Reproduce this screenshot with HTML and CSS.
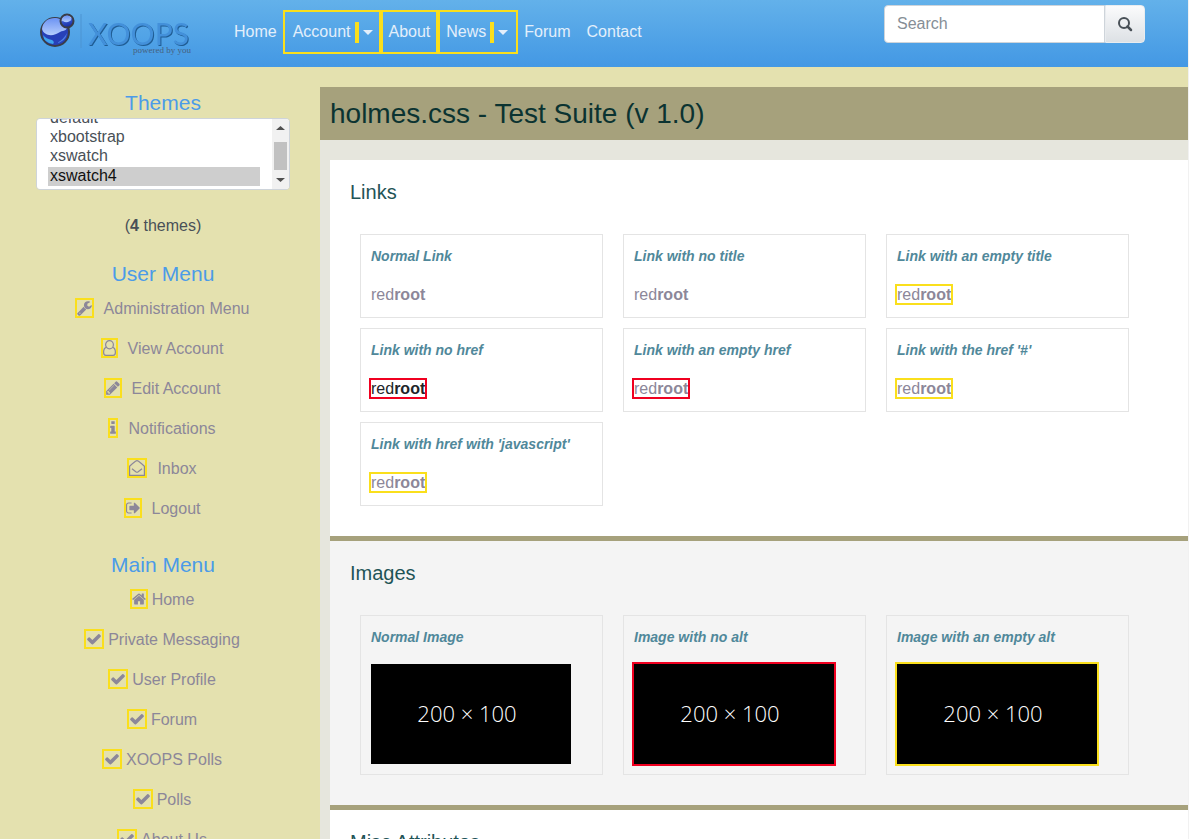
FILE: index.html
```html
<!DOCTYPE html>
<html lang="en">
<head>
<meta charset="utf-8">
<title>holmes.css - Test Suite</title>
<link rel="stylesheet" href="styles.css">
</head>
<body>
<svg class="sprite" aria-hidden="true">
  <symbol id="check" viewBox="0 0 1792 1792"><path d="M1671 566q0 40-28 68l-724 724-136 136q-28 28-68 28t-68-28l-136-136-362-362q-28-28-28-68t28-68l136-136q28-28 68-28t68 28l294 295 656-657q28-28 68-28t68 28l136 136q28 28 28 68z"/></symbol>
</svg>
<header class="navbar">
  <a class="brand" href="/" aria-label="XOOPS powered by you">
    <svg width="156" height="48" viewBox="0 0 156 48">
      <defs>
        <linearGradient id="ball" x1="0" y1="0" x2="0.3" y2="1">
          <stop offset="0" stop-color="#5c86ee"/><stop offset="0.45" stop-color="#a5c0fb"/><stop offset="0.55" stop-color="#3557cf"/><stop offset="1" stop-color="#1a2fa5"/>
        </linearGradient>
        <linearGradient id="shine" x1="0" y1="0" x2="0" y2="1">
          <stop offset="0" stop-color="#6c93f3"/><stop offset="1" stop-color="#b5cdfd"/>
        </linearGradient>
      </defs>
      <circle cx="17" cy="24" r="14" fill="#2740b8" stroke="#3a3d48" stroke-width="2"/>
      <path d="M4 21C5 9 21 6 28 16C31 23 26 22 22 24C15 29 6 28 4 21Z" fill="url(#shine)"/>
      <path d="M5 27Q6 35 15 36Q17 34 14 32Q8 31 5 27Z" fill="#3fa4ec"/>
      <path d="M19 35Q28 33 29 25Q26 31 19 35Z" fill="#4d7ee4"/>
      <circle cx="29" cy="13" r="6.500" fill="url(#ball)" stroke="#3a3d48" stroke-width="2"/>
      <path d="M24 12Q26 7 31 8Q35 12 32 13Q27 16 24 12Z" fill="url(#shine)"/>
      <path d="M43 6V40" stroke="#4c94d2" stroke-width="1"/>
      <text class="logo-name" x="50" y="37">XOOPS</text>
      <text class="logo-tag" x="95" y="45">powered by you</text>
    </svg>
  </a>
  <nav class="nav">
    <a class="nav-link" href="#home">Home</a>
    <a class="nav-link warn" href="#">Account<b class="marker warn"></b><i class="caret"></i></a>
    <a class="nav-link warn" href="#">About</a>
    <a class="nav-link warn" href="#">News<b class="marker warn"></b><i class="caret"></i></a>
    <a class="nav-link" href="#forum">Forum</a>
    <a class="nav-link" href="#contact">Contact</a>
  </nav>
  <form class="search" role="search">
    <input class="search-input" type="text" placeholder="Search" aria-label="Search">
    <button class="search-button" type="submit" aria-label="Submit search">
      <svg width="16" height="16" viewBox="0 0 16 16" fill="none" stroke="#495057"><circle cx="7" cy="7" r="5" stroke-width="2"/><path d="M10.500 10.500L14 14" stroke-width="2.500" stroke-linecap="round"/></svg>
    </button>
  </form>
</header>
<div class="page">
  <aside class="sidebar">
    <section class="block">
      <h2 class="block-title"><label for="theme">Themes</label></h2>
      <div class="themes-box">
        <select class="themes" id="theme" size="3">
          <option>default</option>
          <option>xbootstrap</option>
          <option>xswatch</option>
          <option selected>xswatch4</option>
        </select>
        <svg class="scrollbar" width="17" height="70" viewBox="0 0 17 70" aria-hidden="true">
          <path d="M0 0H17V70H0Z" fill="#f1f1f1"/>
          <path d="M4 11L8.500 7L13 11ZM4 59H13L8.500 63Z" fill="#505050"/>
          <path d="M2 23H15V51H2Z" fill="#c1c1c1"/>
        </svg>
      </div>
      <p class="count">(<b>4</b> themes)</p>
    </section>
    <section class="block">
      <h2 class="block-title">User Menu</h2>
      <nav class="menu menu-user">
        <a class="menu-link" href="#admin"><svg class="icon warn" width="15" height="16" viewBox="64 0 1664 1792"><path d="M448 1472q0-26-19-45t-45-19-45 19-19 45 19 45 45 19 45-19 19-45zm644-420l-682 682q-37 37-90 37-52 0-91-37l-106-108q-38-36-38-90 0-53 38-91l681-681q39 98 114.500 173.500t173.500 114.500zm634-435q0 39-23 106-47 134-164.500 217.500t-258.500 83.500q-185 0-316.500-131.500t-131.500-316.500 131.500-316.500 316.500-131.500q58 0 121.500 16.500t107.500 46.500q16 11 16 28t-16 28l-293 169v224l193 107q5-3 79-48.500t135.500-81 70.500-35.500q15 0 23.500 10t8.500 25z"/></svg>Administration Menu</a>
        <a class="menu-link" href="#account"><svg class="icon line warn" width="13" height="16" viewBox="0 0 13 16"><ellipse cx="6.500" cy="4.700" rx="3.900" ry="4.100"/><path d="M3.200 7.300C1.200 7.800.6 10 .6 12.500C.6 14.500 1.500 15.400 3 15.400H10C11.500 15.400 12.400 14.500 12.400 12.500C12.400 10 11.800 7.800 9.800 7.300"/></svg>View Account</a>
        <a class="menu-link" href="#edit"><svg class="icon warn" width="14" height="16" viewBox="128 0 1536 1792"><path d="M491 1536l91-91-235-235-91 91v107h128v128h107zm523-928q0-22-22-22-10 0-17 7l-542 542q-7 7-7 17 0 22 22 22 10 0 17-7l542-542q7-7 7-17zm-54-192l416 416-832 832h-416v-416zm683 96q0 53-37 90l-166 166-416-416 166-165q36-38 90-38 53 0 91 38l235 234q37 39 37 91z"/></svg>Edit Account</a>
        <a class="menu-link" href="#notifications"><svg class="icon warn" width="6" height="16" viewBox="576 0 640 1792"><path d="M1216 1344v128q0 26-19 45t-45 19h-512q-26 0-45-19t-19-45v-128q0-26 19-45t45-19h64v-384h-64q-26 0-45-19t-19-45v-128q0-26 19-45t45-19h384q26 0 45 19t19 45v576h64q26 0 45 19t19 45zm-128-1152v192q0 26-19 45t-45 19h-256q-26 0-45-19t-19-45v-192q0-26 19-45t45-19h256q26 0 45 19t19 45z"/></svg>Notifications</a>
        <a class="menu-link" href="#inbox"><svg class="icon line warn" width="16" height="16" viewBox="0 0 16 16"><path d="M.6 6.200Q4 3 6.500 1.200Q8 .2 9.500 1.200Q12 3 15.400 6.200V15.400H.6ZM3 8.800L6.800 11.800Q8 12.700 9.200 11.800L13 8.800"/></svg>Inbox</a>
        <a class="menu-link" href="#logout"><svg class="icon warn" width="14" height="16" viewBox="64 0 1600 1792"><path d="M704 1440q0 4 1 20t.5 26.500-3 23.500-10 19.500-20.500 6.500h-320q-119 0-203.500-84.500t-84.500-203.500v-704q0-119 84.500-203.500t203.500-84.500h320q13 0 22.500 9.500t9.500 22.500q0 4 1 20t.5 26.500-3 23.500-10 19.500-20.500 6.500h-320q-66 0-113 47t-47 113v704q0 66 47 113t113 47h312l11.500 1 11.500 3 8 5.500 7 9 2 13.500zm928-544q0 26-19 45l-544 544q-19 19-45 19t-45-19-19-45v-288h-448q-26 0-45-19t-19-45v-384q0-26 19-45t45-19h448v-288q0-26 19-45t45-19 45 19l544 544q19 19 19 45z"/></svg>Logout</a>
      </nav>
    </section>
    <section class="block">
      <h2 class="block-title">Main Menu</h2>
      <nav class="menu menu-main">
        <a class="menu-link" href="#home"><svg class="icon warn" width="14" height="16" viewBox="64 0 1664 1792"><path d="M1472 992v480q0 26-19 45t-45 19h-384v-384h-256v384h-384q-26 0-45-19t-19-45v-480q0-1 .5-3t.5-3l575-474 575 474q1 2 1 6zm223-69l-62 74q-8 9-21 11h-3q-13 0-21-7l-692-577-692 577q-12 8-24 7-13-2-21-11l-62-74q-8-10-7-23.500t11-21.500l719-599q32-26 76-26t76 26l244 204v-195q0-14 9-23t23-9h192q14 0 23 9t9 23v408l219 182q10 8 11 21.500t-7 23.500z"/></svg>Home</a>
        <a class="menu-link" href="#messages"><svg class="icon warn" width="16" height="16"><use href="#check"/></svg>Private Messaging</a>
        <a class="menu-link" href="#profile"><svg class="icon warn" width="16" height="16"><use href="#check"/></svg>User Profile</a>
        <a class="menu-link" href="#forum"><svg class="icon warn" width="16" height="16"><use href="#check"/></svg>Forum</a>
        <a class="menu-link" href="#xoopspolls"><svg class="icon warn" width="16" height="16"><use href="#check"/></svg>XOOPS Polls</a>
        <a class="menu-link" href="#polls"><svg class="icon warn" width="16" height="16"><use href="#check"/></svg>Polls</a>
        <a class="menu-link" href="#about"><svg class="icon warn" width="16" height="16"><use href="#check"/></svg>About Us</a>
      </nav>
    </section>
  </aside>
  <main class="content">
    <h1 class="title">holmes.css - Test Suite (v 1.0)</h1>
    <div class="sections">
      <section class="suite">
        <h2 class="suite-title">Links</h2>
        <div class="cards">
          <article class="card"><h3 class="card-title">Normal Link</h3><a class="sample" href="#root" title="redroot">red<b>root</b></a></article>
          <article class="card"><h3 class="card-title">Link with no title</h3><a class="sample" href="#root">red<b>root</b></a></article>
          <article class="card"><h3 class="card-title">Link with an empty title</h3><a class="sample warn" href="#root" title="">red<b>root</b></a></article>
          <article class="card"><h3 class="card-title">Link with no href</h3><a class="sample sample-plain error">red<b>root</b></a></article>
          <article class="card"><h3 class="card-title">Link with an empty href</h3><a class="sample error" href="">red<b>root</b></a></article>
          <article class="card"><h3 class="card-title">Link with the href '#'</h3><a class="sample warn" href="#">red<b>root</b></a></article>
          <article class="card"><h3 class="card-title">Link with href with 'javascript'</h3><a class="sample warn" href="javascript:void(0)">red<b>root</b></a></article>
        </div>
      </section>
      <section class="suite suite-alt">
        <h2 class="suite-title">Images</h2>
        <div class="cards">
          <article class="card"><h3 class="card-title">Normal Image</h3><svg class="picture" width="200" height="100" role="img"><text x="96" y="58">200 × 100</text></svg></article>
          <article class="card"><h3 class="card-title">Image with no alt</h3><svg class="picture error" width="200" height="100" role="img"><text x="96" y="58">200 × 100</text></svg></article>
          <article class="card"><h3 class="card-title">Image with an empty alt</h3><svg class="picture warn" width="200" height="100" role="img"><text x="96" y="58">200 × 100</text></svg></article>
        </div>
      </section>
      <section class="suite">
        <h2 class="suite-title">Misc Attributes</h2>
      </section>
    </div>
  </main>
</div>
<script src="main.js"></script>
</body>
</html>
```
FILE: styles.css
```css
* { box-sizing: border-box; }

body {
  display: flex;
  flex-direction: column;
  height: 100vh;
  margin: 0;
  overflow: hidden;
  border-right: 1px solid #f1f1f1;
  background: #e4e1af;
  color: #495057;
  font: 16px/24px "Liberation Sans", Arial, sans-serif;
}

h1, h2, h3, p { margin: 0; font-weight: 400; }
a { color: #8c8799; text-decoration: none; }
.sprite { display: none; }

.warn { outline: 2px solid #fadf1c; }
.error { outline: 2px solid #f00020; }

/* Top bar */
.navbar {
  display: flex;
  flex: none;
  align-items: flex-start;
  height: 67px;
  padding: 5px 43px 0 38px;
  background: linear-gradient(#63b1ea, #4398e4);
}
.brand { margin: 3px 32px 0 0; height: 48px; }
.logo-name {
  font: 400 30px Lato, sans-serif;
  fill: #4390da;
  filter: drop-shadow(1px 1px 0 #1f5c93);
}
.logo-tag { font: 9px "Liberation Serif", serif; fill: #46617e; }
.nav { display: flex; margin-top: 7px; }
.nav-link {
  display: flex;
  align-items: center;
  padding: 8px;
  color: #e3effb;
}
.marker { width: 0; height: 17px; margin: 0 6px; }
.caret {
  border: 5px solid transparent;
  border-top-color: #e3effb;
  border-bottom: 0;
}
.search { display: flex; width: 261px; height: 38px; margin-left: auto; }
.search-input {
  flex: 1;
  min-width: 0;
  padding: 6px 12px;
  border: 1px solid #ced4da;
  border-radius: 4px 0 0 4px;
  background: #fff;
  color: #495057;
  font: inherit;
}
.search-input::placeholder { color: #868e96; }
.search-button {
  display: grid;
  place-items: center;
  width: 40px;
  padding: 0;
  border: 1px solid #e9ecef;
  border-radius: 0 4px 4px 0;
  background: linear-gradient(#fbfbfc, #dde1e5);
}

.page { display: flex; flex: 1; min-height: 0; }

/* Sidebar */
.sidebar {
  display: flex;
  flex: none;
  flex-direction: column;
  gap: 23px;
  width: 320px;
  padding: 23px 30px 0 36px;
  text-align: center;
}
.block-title {
  margin-bottom: 3px;
  color: #4b9be8;
  font-size: 21px;
  line-height: 25px;
}
.themes-box { position: relative; }
.themes {
  display: block;
  width: 100%;
  height: 72px;
  padding: 6px 29px 3px 11px;
  overflow-y: scroll;
  scrollbar-width: none;
  border: 1px solid #ced4da;
  border-radius: 4px;
  background: #fff;
  color: #495057;
  font: inherit;
}
.themes option { height: 19px; padding: 0 2px; line-height: 19px; }
.themes option:checked { background: #cecece linear-gradient(#cecece, #cecece); color: #101010; }
.scrollbar {
  position: absolute;
  top: 1px;
  right: 1px;
  border-radius: 0 3px 3px 0;
  pointer-events: none;
}
.count { margin-top: 24px; }
.menu-link {
  display: flex;
  align-items: center;
  justify-content: center;
  height: 40px;
}
.icon { margin-bottom: 2px; fill: currentColor; }
.line { fill: none; stroke: currentColor; stroke-width: 1.2; }
.menu-user .icon { margin-right: 12px; }
.menu-main .icon { margin-right: 6px; }

/* Test suite */
.content {
  flex: 1;
  align-self: flex-start;
  margin-top: 20px;
  background: #e6e6dd;
}
.title {
  padding: 10px;
  background: #a6a17c;
  color: #0b3331;
  font-size: 28px;
  line-height: 33px;
}
.sections { padding: 20px 0 0 10px; }
.suite {
  padding: 20px 59px 30px 30px;
  border-bottom: 5px solid #a6a17c;
  background: #fff;
}
.suite-alt { background: #f4f4f4; }
.suite-title {
  margin: 0 0 30px -10px;
  color: #1f5457;
  font-size: 20px;
}
.cards {
  display: grid;
  grid-template-columns: repeat(3, 1fr);
  gap: 10px 20px;
}
.card { padding: 10px; border: 1px solid #e4e4e4; }
.card-title {
  margin-bottom: 15px;
  color: #50889a;
  font-size: 14px;
  font-style: italic;
  font-weight: 700;
  line-height: 23px;
}
.sample-plain { color: #212529; }
.picture { display: block; background: #000; }
.picture text {
  fill: #fff;
  font: 300 22px "Open Sans", sans-serif;
  text-anchor: middle;
}
```
FILE: main.js
```js
const themes = document.getElementById('theme');
themes.scrollTop = themes.scrollHeight;
```
